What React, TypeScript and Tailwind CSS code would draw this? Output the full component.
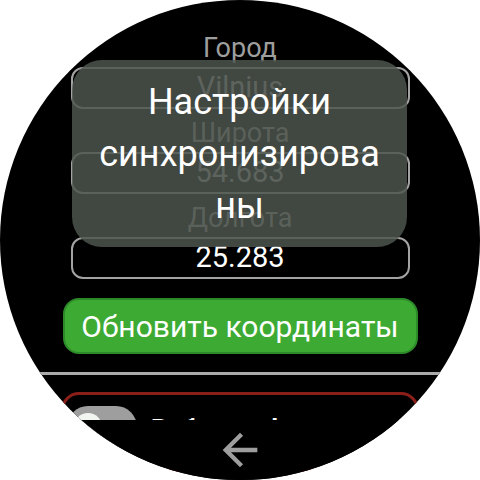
import React from "react";

function Field({ label, value, dim }: { label: string; value: string; dim?: boolean }) {
  return (
    <div className="flex flex-col items-center w-[339px]">
      <div className="h-[24px] leading-[24px] text-[27px] text-[#9e9e9e]">{label}</div>
      <div
        className={
          "mt-[7px] h-[42px] w-full rounded-[12px] border-2 border-[#a3a3a3] flex items-center justify-center text-[29px] " +
          (dim ? "text-[#b0b0b0]" : "text-white")
        }
      >
        {value}
      </div>
    </div>
  );
}

export default function App() {
  return (
    <div className="w-[480px] h-[480px] bg-white font-[Roboto,sans-serif]">
      <div className="relative w-[480px] h-[480px] rounded-full bg-black overflow-hidden">
        <div className="flex flex-col items-center pt-[36px]">
          <Field label="Город" value="Vilnius" dim />
          <div className="mt-[12px]">
            <Field label="Широта" value="54.683" dim />
          </div>
          <div className="mt-[12px]">
            <Field label="Долгота" value="25.283" />
          </div>
          <button className="mt-[19px] h-[56px] w-[355px] rounded-[16px] border-2 border-[#2d8a28] bg-[#3dab33] text-white text-[30px] flex items-center justify-center">
            Обновить координаты
          </button>
          <div className="mt-[18px] h-[3px] w-full bg-[#aaaaaa]" />
          <div className="mt-[17px] w-[358px] h-[80px] rounded-[18px] border-[3px] border-[#8a1f1a] flex items-start pt-[11px] pl-[3px]">
            <div className="relative w-[70px] h-[42px] rounded-full bg-[#9e9e9e] shrink-0">
              <div className="absolute left-[7px] top-[7px] w-[28px] h-[28px] rounded-full bg-[#f1f6f0]" />
            </div>
            <div className="ml-[14px] text-white text-[26px] font-bold leading-[46px]">Работа в фоне</div>
          </div>
        </div>

        {/* bottom nav overlay */}
        <div className="absolute left-0 right-0 bottom-0 h-[60px] bg-black flex justify-center">
          <svg className="mt-[4px]" width="52" height="52" viewBox="0 0 24 24" fill="#9e9e9e">
            <path d="M20 11H7.83l5.59-5.59L12 4l-8 8 8 8 1.41-1.41L7.83 13H20v-2z" />
          </svg>
        </div>

        {/* toast overlay */}
        <div className="absolute left-[72px] top-[60px] w-[335px] h-[187px] rounded-[30px] bg-[rgba(78,85,77,0.84)] flex items-center justify-center px-[20px]">
          <div className="text-white text-[36px] leading-[52px] text-center [overflow-wrap:anywhere]">
            Настройки синхронизированы
          </div>
        </div>
      </div>
    </div>
  );
}
